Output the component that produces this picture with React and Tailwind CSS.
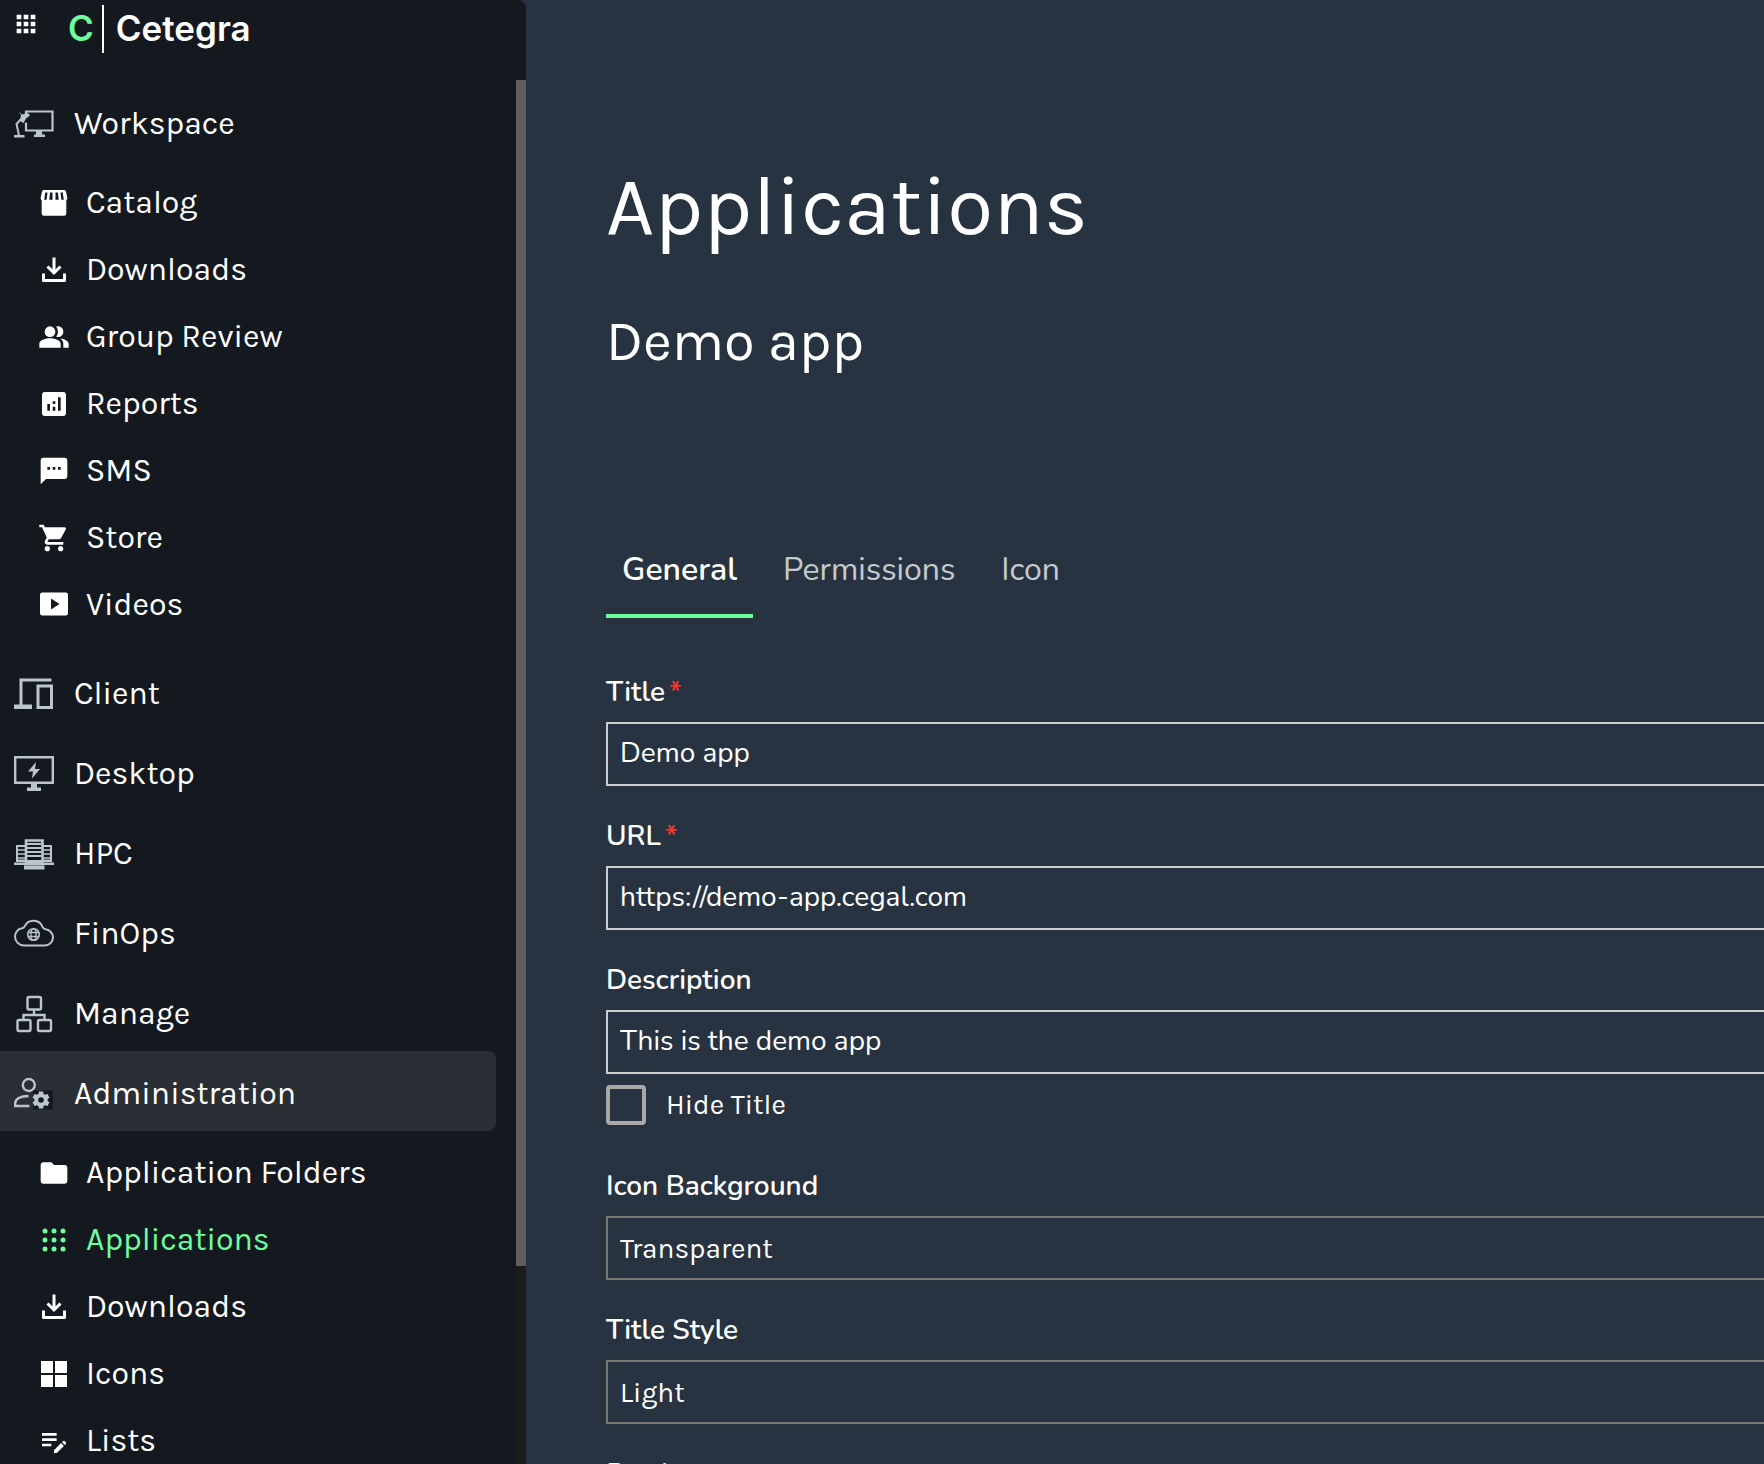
import { useState } from 'react'
import {
  MdApps,
  MdAnalytics,
  MdEditNote,
  MdFolder,
  MdPeopleAlt,
  MdShoppingCart,
  MdSms,
} from 'react-icons/md'

function WorkspaceIcon() {
  return (
    <svg viewBox="0 0 40 40" className="size-10" fill="none" stroke="currentColor">
      <path d="M12 13V7.500h26.500v19H12v-8" strokeWidth="2.200" />
      <path d="M22 26.500h6v4h3V33H20v-2.500h2z" fill="currentColor" stroke="none" />
      <path d="M0 31h10.500v2.500H0z" fill="currentColor" stroke="none" />
      <path d="M5 31.500L2.500 20L8 14" strokeWidth="2" />
      <path d="M5 8l3 2.500L14 9l2 2.500-4 3L9.500 19 6 17l1-6z" fill="currentColor" stroke="none" />
    </svg>
  )
}

function ClientIcon() {
  return (
    <svg viewBox="0 0 40 40" className="size-10" fill="none" stroke="currentColor">
      <path d="M7 32V6h30.500" strokeWidth="3" />
      <path d="M0 30.500h18v4.500H0z" fill="currentColor" stroke="none" />
      <path d="M24 12h13.500v21.500H24z" strokeWidth="3" />
    </svg>
  )
}

function DesktopIcon() {
  return (
    <svg viewBox="0 0 40 40" className="size-10" fill="none" stroke="currentColor">
      <path d="M1.200 3.200h37.600v25.600H1.200z" strokeWidth="2.400" />
      <path d="M17 29h6v4.500h4v3.500H13v-3.500h4z" fill="currentColor" stroke="none" />
      <path d="M22 8l-8 9.500h5L18 24.500l8-9.500h-5z" fill="currentColor" stroke="none" />
    </svg>
  )
}

function HpcIcon() {
  return (
    <svg viewBox="0 0 40 40" className="size-10" fill="none" stroke="currentColor">
      <path d="M3 27V12h8.500M37 27V12h-8.500" strokeWidth="2" />
      <path d="M3 16h8.500M3 20h8.500M3 24h8.500M28.500 16H37M28.500 20H37M28.500 24H37" strokeWidth="1.600" />
      <path d="M2 25.500h10v2.500H2zM28 25.500h10v2.500H28zM0 28.500h11V31H0zM29 28.500h11V31H29z" fill="currentColor" stroke="none" />
      <path d="M12 6.500h16.500V30H12z" strokeWidth="2.600" />
      <path d="M13 10h14.500M13 14h14.500M13 18h14.500M13 22h14.500" strokeWidth="2" />
      <path d="M12 26h16.500v4H12zM10 31.500h20.500v4H10z" fill="currentColor" stroke="none" />
    </svg>
  )
}

function FinOpsIcon() {
  return (
    <svg viewBox="0 0 40 40" className="size-10" fill="none" stroke="currentColor">
      <path d="M10 31.500a9 9 0 0 1-9-9c0-4 3-7.500 7-8.200 1.500-.3 2-.8 2.600-1.800a9.700 9.700 0 0 1 18 .5c.6 1.600 1.400 2 3 2.300 4 .7 7.400 3.800 7.400 8a8.200 8.200 0 0 1-8.200 8.200z" strokeWidth="2" />
      <circle cx="19.500" cy="20.500" r="5.800" strokeWidth="1.500" />
      <ellipse cx="19.500" cy="20.500" rx="2.600" ry="5.800" strokeWidth="1.300" />
      <path d="M14 18.500h11M14 22.500h11" strokeWidth="1.300" />
    </svg>
  )
}

function ManageIcon() {
  return (
    <svg viewBox="0 0 40 40" className="size-10" fill="none" stroke="currentColor" strokeWidth="2.400">
      <rect x="13.500" y="3" width="13.500" height="12.500" rx="1.500" />
      <rect x="3.500" y="26" width="13" height="11" rx="1.500" />
      <rect x="24" y="26" width="13" height="11" rx="1.500" />
      <path d="M20 15.500V21M9.500 26v-5H30.500v5" />
    </svg>
  )
}

function AdministrationIcon() {
  return (
    <svg viewBox="0 0 40 40" className="size-10" fill="none" stroke="currentColor">
      <circle cx="14.800" cy="11" r="6" strokeWidth="2.400" />
      <path d="M15.500 32H1.200v-2.500c0-4.500 5-7.500 13.300-7.500" strokeWidth="2.400" />
      <path d="M19 16.500h20v19H19z" fill="#141920" stroke="none" />
      <circle cx="27" cy="26" r="4.800" strokeWidth="4" />
      <path d="M27 17.500V21M27 31v3.500M19.600 21.700l3 1.800M31.400 28.500l3 1.800M19.600 30.300l3-1.800M31.400 23.500l3-1.800" strokeWidth="4.500" />
    </svg>
  )
}

function CatalogIcon() {
  return (
    <svg viewBox="0 0 32 32" className="size-8" fill="currentColor">
      <path d="M6 3h20c1 0 1.700.6 2 1.500l1.200 5.500c.3 1.700-.1 2.700-.9 3.500v13a2.200 2.200 0 0 1-2.200 2.200H5.900a2.200 2.200 0 0 1-2.200-2.200v-13C2.900 12.700 2.500 11.700 2.800 10L4 4.500C4.300 3.600 5 3 6 3z" />
      <path d="M7.300 5.500h2.200l-.9 7.200H6.200zM12.100 5.500h2.400v7.200h-3.200zM17.500 5.500h2.400l.8 7.200h-3.200zM22.500 5.500h2.200l1.100 7.200h-2.400z" fill="#141920" />
    </svg>
  )
}

function VideosIcon() {
  return (
    <svg viewBox="0 0 32 32" className="size-8" fill="currentColor">
      <path
        fillRule="evenodd"
        d="M4.200 3.500h23.600A2.200 2.200 0 0 1 30 5.700v18.600a2.200 2.200 0 0 1-2.200 2.200H4.200A2.200 2.200 0 0 1 2 24.300V5.700a2.200 2.200 0 0 1 2.200-2.200zM13 9.500v11l8.500-5.500z"
      />
    </svg>
  )
}

function DownloadIcon() {
  return (
    <svg viewBox="0 0 32 32" className="size-8" fill="none" stroke="currentColor" strokeWidth="3">
      <path d="M16 3.500v15M9.500 12.500l6.500 6.500 6.500-6.500" />
      <path d="M5.500 19.500v7h21v-7" strokeLinejoin="round" />
    </svg>
  )
}

function TilesIcon() {
  return (
    <svg viewBox="0 0 32 32" className="size-8" fill="currentColor">
      <path d="M3 3h12v12H3zM17 3h12v12H17zM3 17h12v12H3zM17 17h12v12H17z" />
    </svg>
  )
}

function DotsIcon() {
  return (
    <svg viewBox="0 0 32 32" className="size-8" fill="currentColor">
      {[7, 16, 25].map((y) => [7, 16, 25].map((x) => <circle key={`${x}-${y}`} cx={x} cy={y} r="2.500" />))}
    </svg>
  )
}

const sections = [
  {
    label: 'Workspace',
    icon: WorkspaceIcon,
    items: [
      { label: 'Catalog', icon: CatalogIcon },
      { label: 'Downloads', icon: DownloadIcon },
      { label: 'Group Review', icon: MdPeopleAlt },
      { label: 'Reports', icon: MdAnalytics },
      { label: 'SMS', icon: MdSms },
      { label: 'Store', icon: MdShoppingCart },
      { label: 'Videos', icon: VideosIcon },
    ],
  },
  { label: 'Client', icon: ClientIcon },
  { label: 'Desktop', icon: DesktopIcon },
  { label: 'HPC', icon: HpcIcon },
  { label: 'FinOps', icon: FinOpsIcon },
  { label: 'Manage', icon: ManageIcon },
  {
    label: 'Administration',
    icon: AdministrationIcon,
    selected: true,
    items: [
      { label: 'Application Folders', icon: MdFolder },
      { label: 'Applications', icon: DotsIcon, current: true },
      { label: 'Downloads', icon: DownloadIcon },
      { label: 'Icons', icon: TilesIcon },
      { label: 'Lists', icon: MdEditNote },
    ],
  },
]

function NavSection({ section }) {
  const Icon = section.icon
  return (
    <li>
      <a
        href="#"
        className={`mr-5 flex h-20 items-center gap-5 rounded-r-lg pl-3.5 pt-1.5 ${section.selected ? 'bg-[#2a2e35]' : ''}`}
      >
        <span className="text-[#bcc4cc]"><Icon /></span>
        {section.label}
      </a>
      {section.items && (
        <ul className="pt-2 pb-[13px]">
          {section.items.map((item) => {
            const ItemIcon = item.icon
            return (
              <li key={item.label}>
                <a
                  href="#"
                  className={`flex h-[67px] items-center gap-4 pl-[38px] ${item.current ? 'text-[#6dfd9d]' : ''}`}
                >
                  <ItemIcon className="size-8" />
                  {item.label}
                </a>
              </li>
            )
          })}
        </ul>
      )}
    </li>
  )
}

function Sidebar() {
  return (
    <aside className="flex h-screen w-[526px] shrink-0 flex-col overflow-hidden rounded-tr-lg bg-[#141920] font-['Karla','Inter',sans-serif] text-[32px] leading-9">
      <div className="flex h-20 shrink-0 items-start gap-7 pl-3 pt-[5px]">
        <button type="button" aria-label="Apps" className="pt-[5px]">
          <MdApps className="size-7" />
        </button>
        <a href="#" className="flex h-12 items-center font-['Inter',sans-serif] text-[35px] font-semibold">
          <span className="pr-2 pb-0.5 text-[#6dfd9d]">C</span>
          <span className="flex h-full items-center border-l-2 border-white pb-0.5 pl-3">Cetegra</span>
        </a>
      </div>
      <div className="flex min-h-0 flex-1">
        <nav className="flex-1 overflow-hidden pt-px">
          <ul>
            {sections.map((s) => <NavSection key={s.label} section={s} />)}
          </ul>
        </nav>
        <div className="w-2.5 bg-[#1c1c1a]">
          <div className="h-6/7 bg-[#5f5e5c]" />
        </div>
      </div>
    </aside>
  )
}

function Field({ id, label, required, children }) {
  return (
    <div className="pb-8">
      <label htmlFor={id} className="flex h-12 items-start gap-1 pt-0.5 text-[28px] leading-8 font-semibold">
        {label}
        {required && <span className="text-[#f6352c]">*</span>}
      </label>
      {children}
    </div>
  )
}

function TextField({ id, label, required, value, onChange }) {
  return (
    <Field id={id} label={label} required={required}>
      <input
        id={id}
        type="text"
        value={value}
        onChange={(e) => onChange(id, e.target.value)}
        className="h-16 w-full border-2 border-r-0 border-[#cfcdcb] bg-transparent px-3 pb-0.5 text-[28px] outline-none"
      />
    </Field>
  )
}

function SelectField({ id, label, value, options, onChange }) {
  return (
    <Field id={id} label={label}>
      <select
        id={id}
        value={value}
        onChange={(e) => onChange(id, e.target.value)}
        className="h-16 w-full appearance-none border-2 border-r-0 border-[#7d7571] bg-transparent px-3 pt-0.5 font-['Karla','Inter',sans-serif] text-[28px] outline-none"
      >
        {options.map((o) => <option key={o}>{o}</option>)}
      </select>
    </Field>
  )
}

export default function App() {
  const [tab, setTab] = useState('General')
  const [form, setForm] = useState({
    title: 'Demo app',
    url: 'https://demo-app.cegal.com',
    description: 'This is the demo app',
    hideTitle: false,
    background: 'Transparent',
    titleStyle: 'Light',
    border: 'None',
  })
  const set = (key, value) => setForm((f) => ({ ...f, [key]: value }))

  return (
    <div className="flex h-screen overflow-hidden bg-[#283341] text-white">
      <Sidebar />
      <main className="h-screen min-w-0 flex-1 overflow-hidden pt-[158px] pl-20 font-['Nunito','Noto_Sans',sans-serif]">
        <h1 className="font-['Karla','Inter',sans-serif] text-[84px] leading-24">Applications</h1>
        <h2 className="mt-12 font-['Karla','Inter',sans-serif] text-[56px] leading-20">Demo app</h2>

        <div role="tablist" className="mt-[140px] flex gap-3.5">
          {['General', 'Permissions', 'Icon'].map((t) => (
            <button
              key={t}
              type="button"
              role="tab"
              aria-selected={tab === t}
              onClick={() => setTab(t)}
              className={`h-24 border-b-4 px-4 pt-[3px] text-[32px] ${
                tab === t ? 'border-[#6dfd9d] font-semibold' : 'border-transparent text-[#c5cacd]'
              }`}
            >
              {t}
            </button>
          ))}
        </div>

        <form className="pt-14">
          <TextField id="title" label="Title" required value={form.title} onChange={set} />
          <TextField id="url" label="URL" required value={form.url} onChange={set} />
          <div className="-mb-[21px]">
            <TextField id="description" label="Description" value={form.description} onChange={set} />
          </div>
          <label className="mb-[43px] flex items-center gap-5 font-['Karla','Inter',sans-serif] text-[28px] leading-10">
            <input
              type="checkbox"
              checked={form.hideTitle}
              onChange={(e) => set('hideTitle', e.target.checked)}
              className="size-10 appearance-none rounded-sm border-4 border-[#a8a9a6] checked:bg-[#6dfd9d]"
            />
            Hide Title
          </label>
          <SelectField id="background" label="Icon Background" value={form.background} options={['Transparent', 'Dark', 'Light']} onChange={set} />
          <SelectField id="titleStyle" label="Title Style" value={form.titleStyle} options={['Light', 'Dark']} onChange={set} />
          <SelectField id="border" label="Border" value={form.border} options={['None', 'Solid']} onChange={set} />
        </form>
      </main>
    </div>
  )
}
